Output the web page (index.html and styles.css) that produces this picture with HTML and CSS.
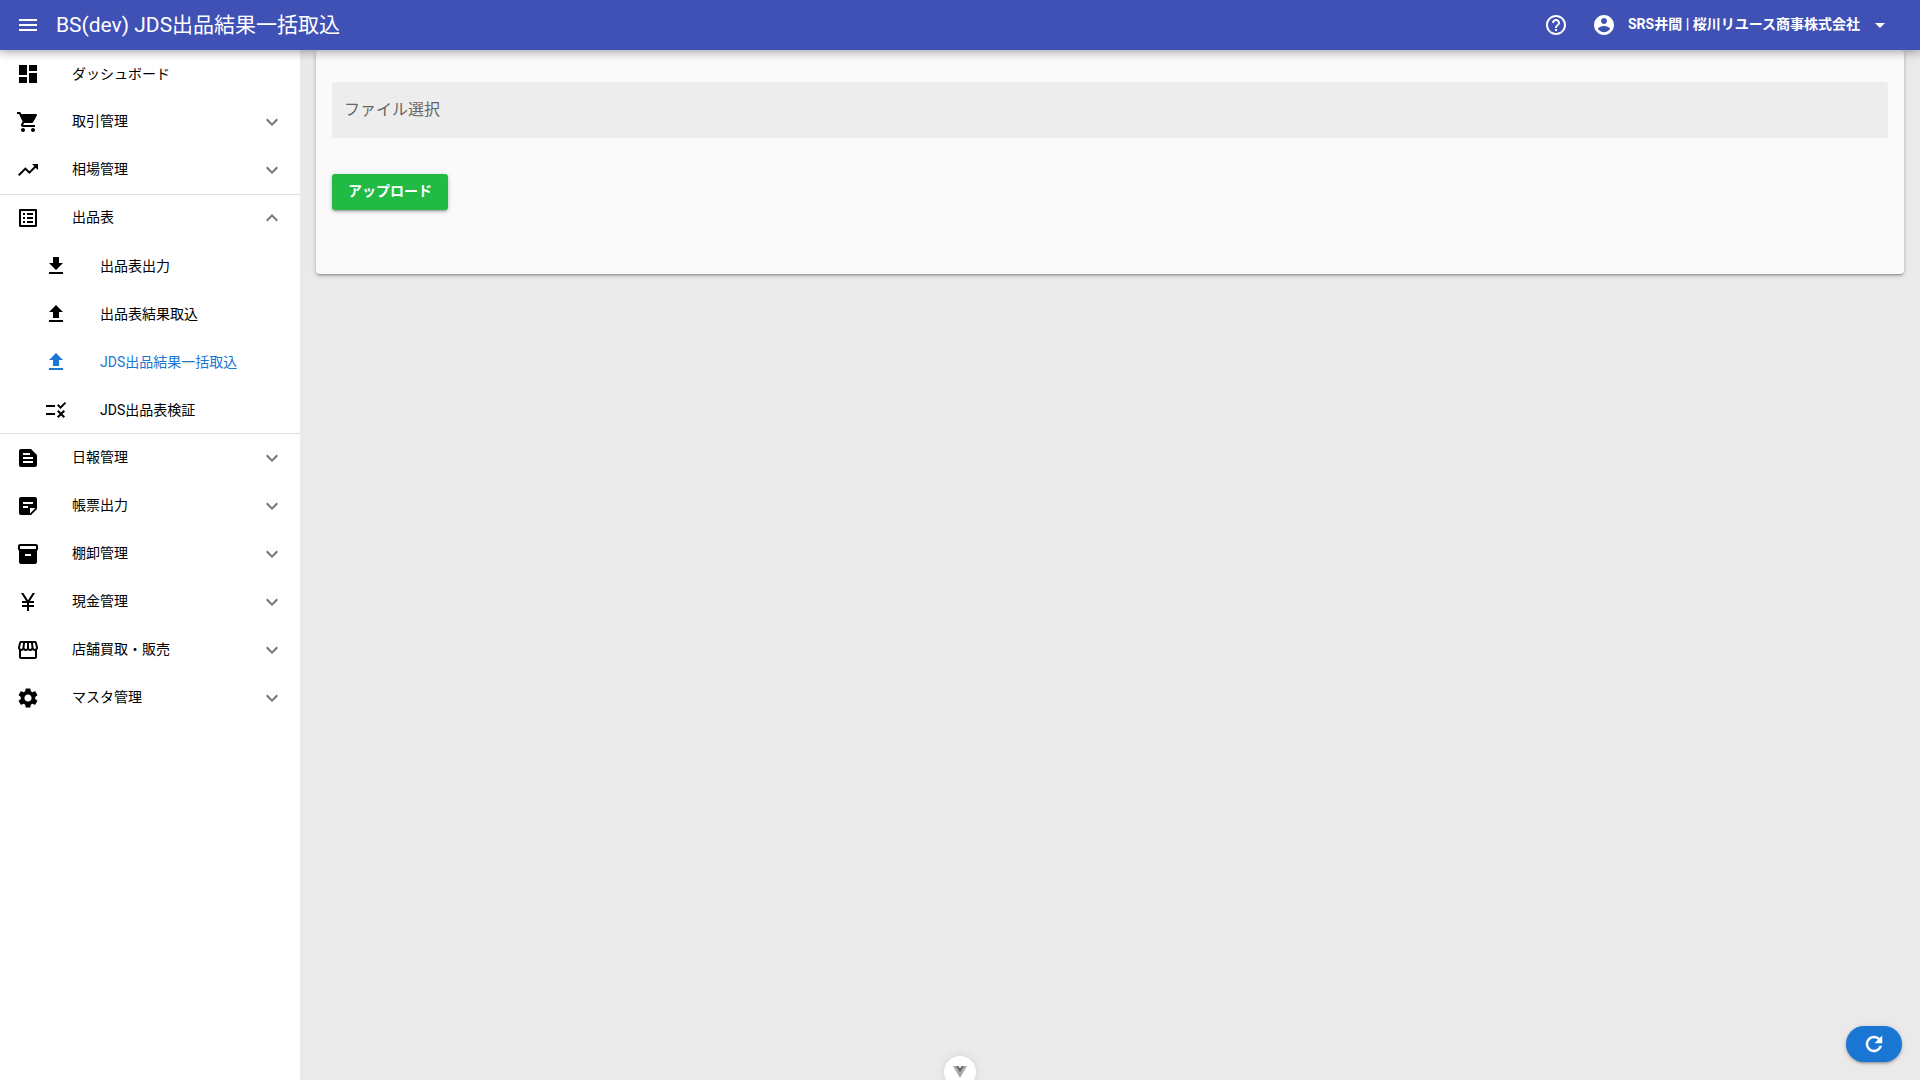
FILE: index.html
```
<!DOCTYPE html>
<html lang="ja">
<head>
  <meta charset="UTF-8">
  <meta name="viewport" content="width=device-width, initial-scale=1.0">
  <title>BS(dev) JDS出品結果一括取込</title>
  <link rel="stylesheet" href="styles.css">
</head>
<body>

  <svg class="sprite" aria-hidden="true">
    <symbol id="expand" viewBox="0 0 24 24"><path d="M7.41 8.59 12 13.17l4.59-4.58L18 10l-6 6-6-6z"/></symbol>
    <symbol id="upload" viewBox="0 0 24 24"><path d="M9 16h6v-6h4l-7-7-7 7h4zm-4 2h14v2H5z"/></symbol>
  </svg>

  <header class="header">
    <button class="icon-btn" type="button" aria-label="メニュー">
      <svg class="icon" viewBox="0 0 24 24"><path d="M3 18h18v-2H3v2zm0-5h18v-2H3v2zm0-7v2h18V6H3z"/></svg>
    </button>
    <h1 class="title">BS(dev) JDS出品結果一括取込</h1>
    <button class="icon-btn" type="button" aria-label="ヘルプ">
      <svg class="icon" viewBox="0 0 24 24"><path d="M11 18h2v-2h-2v2zm1-16C6.48 2 2 6.48 2 12s4.48 10 10 10 10-4.48 10-10S17.52 2 12 2zm0 18c-4.41 0-8-3.59-8-8s3.59-8 8-8 8 3.59 8 8-3.59 8-8 8zm0-14c-2.21 0-4 1.79-4 4h2c0-1.100.9-2 2-2s2 .9 2 2c0 2-3 1.750-3 5h2c0-2.250 3-2.500 3-5 0-2.210-1.790-4-4-4z"/></svg>
    </button>
    <button class="account" type="button">
      <svg class="icon" viewBox="0 0 24 24"><path d="M12 2C6.480 2 2 6.480 2 12s4.480 10 10 10 10-4.480 10-10S17.520 2 12 2zm0 3c1.660 0 3 1.340 3 3s-1.340 3-3 3-3-1.340-3-3 1.340-3 3-3zm0 14.200c-2.500 0-4.710-1.280-6-3.220.030-1.990 4-3.080 6-3.080 1.990 0 5.970 1.090 6 3.080-1.290 1.940-3.500 3.220-6 3.220z"/></svg>
      <span class="account-name">SRS井間 | 桜川リユース商事株式会社</span>
      <svg class="icon" viewBox="0 0 24 24"><path d="M7 10l5 5 5-5z"/></svg>
    </button>
  </header>

  <div class="layout">
    <nav class="drawer">
      <a class="item" href="#">
        <svg class="icon" viewBox="0 0 24 24"><path d="M3 13h8V3H3v10zm0 8h8v-6H3v6zm10 0h8V11h-8v10zm0-18v6h8V3h-8z"/></svg>
        <span class="label">ダッシュボード</span>
      </a>
      <button class="item" type="button">
        <svg class="icon" viewBox="0 0 24 24"><path d="M7 18c-1.100 0-1.990.9-1.990 2S5.900 22 7 22s2-.9 2-2-.9-2-2-2zM1 2v2h2l3.600 7.590-1.350 2.450c-.160.280-.250.610-.250.960 0 1.100.9 2 2 2h12v-2H7.420c-.140 0-.250-.110-.250-.250l.030-.120.9-1.630h7.450c.750 0 1.410-.410 1.750-1.030l3.580-6.490c.080-.140.120-.310.120-.480 0-.550-.450-1-1-1H5.210l-.940-2H1zm16 16c-1.100 0-1.990.9-1.990 2s.890 2 1.990 2 2-.9 2-2-.9-2-2-2z"/></svg>
        <span class="label">取引管理</span>
        <svg class="icon arrow"><use href="#expand"/></svg>
      </button>
      <button class="item" type="button">
        <svg class="icon" viewBox="0 0 24 24"><path d="M16 6l2.290 2.290-4.880 4.880-4-4L2 16.590 3.410 18l6-6 4 4 6.300-6.290L22 12V6z"/></svg>
        <span class="label">相場管理</span>
        <svg class="icon arrow"><use href="#expand"/></svg>
      </button>

      <div class="group">
        <button class="item" type="button" aria-expanded="true">
          <svg class="icon" viewBox="0 0 24 24"><path d="M19 5v14H5V5h14m1.100-2H3.900c-.5 0-.9.4-.9.9v16.200c0 .4.400.9.9.9h16.200c.4 0 .9-.5.9-.9V3.900c0-.5-.5-.9-.9-.9zM11 7h6v2h-6V7zm0 4h6v2h-6v-2zm0 4h6v2h-6zM7 7h2v2H7zm0 4h2v2H7zm0 4h2v2H7z"/></svg>
          <span class="label">出品表</span>
          <svg class="icon arrow open"><use href="#expand"/></svg>
        </button>
        <a class="item sub" href="#">
          <svg class="icon" viewBox="0 0 24 24"><path d="M19 9h-4V3H9v6H5l7 7 7-7zM5 18v2h14v-2H5z"/></svg>
          <span class="label">出品表出力</span>
        </a>
        <a class="item sub" href="#">
          <svg class="icon"><use href="#upload"/></svg>
          <span class="label">出品表結果取込</span>
        </a>
        <a class="item sub active" href="#" aria-current="page">
          <svg class="icon"><use href="#upload"/></svg>
          <span class="label">JDS出品結果一括取込</span>
        </a>
        <a class="item sub" href="#">
          <svg class="icon" viewBox="0 0 24 24"><path d="M16.540 11 13 7.460l1.410-1.410 2.120 2.120 4.240-4.240 1.410 1.410L16.540 11zM11 7H2v2h9V7zm10 6.410L19.590 12 17 14.590 14.410 12 13 13.410 15.590 16 13 18.590 14.410 20 17 17.410 19.590 20 21 18.590 18.410 16 21 13.410zM11 15H2v2h9v-2z"/></svg>
          <span class="label">JDS出品表検証</span>
        </a>
      </div>

      <button class="item" type="button">
        <svg class="icon" viewBox="0 0 24 24"><path d="M15 3H5c-1.100 0-1.990.9-1.990 2L3 19c0 1.100.890 2 1.990 2H19c1.100 0 2-.9 2-2V9l-6-6zM7 7h7v2H7V7zm10 10H7v-2h10v2zm0-4H7v-2h10v2z"/></svg>
        <span class="label">日報管理</span>
        <svg class="icon arrow"><use href="#expand"/></svg>
      </button>
      <button class="item" type="button">
        <svg class="icon" viewBox="0 0 24 24"><path d="M19 3H5c-1.100 0-2 .9-2 2v14c0 1.100.9 2 2 2h10l6-6V5c0-1.100-.9-2-2-2zm-7 11H7v-2h5v2zm5-4H7V8h10v2zm-3 9.500V14h5.500L14 19.500z"/></svg>
        <span class="label">帳票出力</span>
        <svg class="icon arrow"><use href="#expand"/></svg>
      </button>
      <button class="item" type="button">
        <svg class="icon" viewBox="0 0 24 24"><path d="M20 2H4c-1 0-2 .9-2 2v3.010c0 .720.430 1.340 1 1.690V20c0 1.100 1.100 2 2 2h14c.9 0 2-.9 2-2V8.700c.570-.350 1-.970 1-1.690V4c0-1.100-1-2-2-2zm-5 12H9v-2h6v2zm5-7H4V4h16v3z"/></svg>
        <span class="label">棚卸管理</span>
        <svg class="icon arrow"><use href="#expand"/></svg>
      </button>
      <button class="item" type="button">
        <svg class="icon" viewBox="0 0 24 24"><path d="M13.920 11H18v2h-5v2h5v2h-5v4h-2v-4H6v-2h5v-2H6v-2h4.080L5 3h2.370L12 10.290 16.630 3H19z"/></svg>
        <span class="label">現金管理</span>
        <svg class="icon arrow"><use href="#expand"/></svg>
      </button>
      <button class="item" type="button">
        <svg class="icon" viewBox="0 0 24 24"><path d="M21.900 8.890l-1.050-4.370c-.220-.9-1-1.520-1.910-1.520H5.050c-.9 0-1.690.630-1.900 1.520L2.100 8.890c-.240 1.020-.020 2.060.620 2.880.080.110.190.190.280.290V19c0 1.100.9 2 2 2h14c1.100 0 2-.9 2-2v-6.940c.090-.090.200-.180.280-.280.640-.820.870-1.870.620-2.890zm-2.990-3.900 1.050 4.370c.1.420.010.840-.250 1.170-.140.180-.440.470-.940.470-.610 0-1.140-.490-1.210-1.140L16.980 5l1.930-.010zM13 5h1.960l.540 4.520c.050.390-.070.780-.330 1.070-.220.260-.540.410-.950.410-.670 0-1.220-.590-1.220-1.310V5zM8.490 9.520 9.040 5H11v4.690c0 .720-.550 1.310-1.290 1.310-.340 0-.650-.150-.890-.410-.25-.29-.37-.68-.33-1.070zM4.040 9.360 5.050 5h1.970l-.58 4.860c-.080.650-.6 1.140-1.210 1.140-.490 0-.8-.290-.930-.470-.27-.32-.36-.75-.26-1.170zM5 19v-6.030c.080.010.150.030.230.030.870 0 1.660-.360 2.240-.950.6.6 1.400.950 2.310.950.870 0 1.650-.360 2.230-.930.590.570 1.390.930 2.290.930.840 0 1.640-.350 2.240-.950.580.590 1.370.950 2.240.950.080 0 .150-.020.230-.030V19H5z"/></svg>
        <span class="label">店舗買取・販売</span>
        <svg class="icon arrow"><use href="#expand"/></svg>
      </button>
      <button class="item" type="button">
        <svg class="icon" viewBox="0 0 24 24"><path d="M19.140 12.940c.040-.300.060-.610.060-.940 0-.320-.020-.640-.070-.940l2.030-1.580c.180-.140.230-.410.120-.610l-1.920-3.320c-.120-.220-.370-.290-.590-.220l-2.390.960c-.5-.380-1.030-.7-1.620-.940l-.360-2.540c-.040-.240-.240-.410-.480-.410h-3.840c-.240 0-.430.170-.470.410l-.360 2.540c-.590.240-1.130.570-1.620.940l-2.390-.960c-.220-.080-.470 0-.590.220L2.740 8.870c-.120.210-.080.470.120.610l2.030 1.580c-.050.300-.090.630-.090.940s.020.640.070.940l-2.030 1.580c-.180.140-.230.410-.120.610l1.920 3.320c.120.220.370.290.590.220l2.390-.960c.5.380 1.030.7 1.620.940l.360 2.540c.050.240.240.410.480.410h3.840c.240 0 .440-.170.470-.410l.360-2.540c.590-.240 1.130-.560 1.620-.940l2.390.960c.220.080.470 0 .590-.220l1.920-3.320c.120-.220.070-.470-.120-.610l-2.010-1.580zM12 15.600c-1.980 0-3.600-1.620-3.600-3.600s1.620-3.600 3.600-3.600 3.600 1.620 3.600 3.600-1.620 3.600-3.600 3.600z"/></svg>
        <span class="label">マスタ管理</span>
        <svg class="icon arrow"><use href="#expand"/></svg>
      </button>
    </nav>

    <main class="page">
      <form class="card">
        <label class="file-field" for="file">ファイル選択
          <input class="file-input" id="file" type="file">
        </label>
        <button class="upload-btn" type="button">アップロード</button>
      </form>
    </main>
  </div>

  <button class="reload-btn" type="button" aria-label="再読み込み">
    <svg class="icon" viewBox="0 0 24 24"><path stroke="currentColor" stroke-width="0.5" d="M17.650 6.350C16.200 4.900 14.210 4 12 4c-4.420 0-7.990 3.580-7.990 8s3.570 8 7.990 8c3.730 0 6.840-2.550 7.730-6h-2.080c-.820 2.330-3.040 4-5.650 4-3.310 0-6-2.690-6-6s2.690-6 6-6c1.660 0 3.140.690 4.220 1.780L13 11h7V4l-2.350 2.350z"/></svg>
  </button>

  <button class="devtools-btn" type="button" aria-label="Vue DevTools">
    <svg class="vue-logo" viewBox="0 0 28 24"><path fill="#aaa" d="M0 0h6l8 14 8-14h6L14 24z"/><path fill="#666" d="M6 0h5l3 5 3-5h5l-8 14z"/></svg>
  </button>

</body>
</html>
```
FILE: styles.css
```
:root {
  --header: #3f51b5;
  --primary: #1976d2;
  --green: #21ba45;
  --bg: #eaeaea;
  --line: #e0e0e0;
  --shadow: 0 1px 5px rgba(0, 0, 0, 0.2), 0 2px 2px rgba(0, 0, 0, 0.14), 0 3px 1px -2px rgba(0, 0, 0, 0.12);
}

* {
  box-sizing: border-box;
}

body {
  margin: 0;
  min-height: 100vh;
  display: flex;
  flex-direction: column;
  font-family: Roboto, "Noto Sans CJK JP", sans-serif;
  font-size: 14px;
  line-height: 20px;
  color: #000;
  background: var(--bg);
}

button {
  padding: 0;
  border: none;
  background: none;
  color: inherit;
  font: inherit;
  cursor: pointer;
}

.sprite {
  display: none;
}

.icon {
  display: block;
  flex: none;
  width: 24px;
  height: 24px;
  fill: currentColor;
}

/* header */
.header {
  position: sticky;
  top: 0;
  z-index: 10;
  display: flex;
  align-items: center;
  height: 50px;
  padding: 0 12px;
  background: var(--header);
  color: #fff;
  box-shadow: 0 0 10px 2px rgba(0, 0, 0, 0.2), 0 0 10px rgba(0, 0, 0, 0.24);
}

.icon-btn {
  padding: 4px;
}

.title {
  flex: 1;
  margin: 0;
  padding: 0 12px;
  font-size: 21px;
  line-height: 32px;
  font-weight: 400;
}

.account {
  display: flex;
  align-items: center;
  padding: 0 16px 0 20px;
  font-weight: 700;
}

.account-name {
  padding: 0 8px 2px 12px;
}

/* side menu */
.layout {
  flex: 1;
  display: flex;
}

.drawer {
  flex: none;
  width: 300px;
  background: #fff;
}

.item {
  display: flex;
  align-items: center;
  width: 100%;
  height: 48px;
  padding: 0 16px;
  color: #000;
  text-align: left;
  text-decoration: none;
}

.item.sub {
  padding-left: 44px;
}

.item.active {
  color: var(--primary);
}

.label {
  flex: 1;
  padding-left: 32px;
}

button.item .label {
  padding-bottom: 2px;
}

.arrow {
  color: #757575;
}

.arrow.open {
  transform: rotate(180deg);
}

.group {
  box-shadow: inset 0 1px var(--line), inset 0 -1px var(--line);
}

/* content */
.page {
  flex: 1;
  padding: 0 16px;
}

.card {
  padding: 32px 16px 64px;
  background: #fafafa;
  border-radius: 4px;
  box-shadow: var(--shadow);
}

.file-field {
  display: flex;
  align-items: center;
  height: 56px;
  margin-bottom: 36px;
  padding: 0 12px;
  border-radius: 4px 4px 0 0;
  background: #ededed;
  color: #666;
  font-size: 16px;
  cursor: pointer;
}

.file-input {
  width: 1px;
  height: 1px;
  opacity: 0;
}

.upload-btn {
  display: block;
  height: 36px;
  padding: 0 16px 2px;
  border-radius: 3px;
  background: var(--green);
  color: #fff;
  font-weight: 700;
  box-shadow: var(--shadow);
}

/* floating buttons */
.reload-btn {
  position: fixed;
  right: 18px;
  bottom: 18px;
  padding: 6px 16px;
  border-radius: 28px;
  background: var(--primary);
  color: #fff;
  box-shadow: var(--shadow);
}

.devtools-btn {
  position: fixed;
  bottom: -8px;
  left: 50%;
  width: 32px;
  height: 32px;
  margin-left: -16px;
  border-radius: 50%;
  background: #fff;
  box-shadow: 0 0 8px rgba(0, 0, 0, 0.1);
}

.vue-logo {
  display: block;
  width: 14px;
  height: 12px;
  margin: 0 auto;
}
```
